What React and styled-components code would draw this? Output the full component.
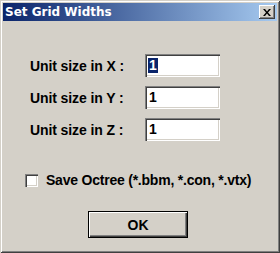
import React, { useState } from "react";
import styled, { createGlobalStyle } from "styled-components";

const Global = createGlobalStyle`
  html, body {
    margin: 0;
    padding: 0;
    background: #d4d0c8;
  }
`;

const Window = styled.div`
  box-sizing: border-box;
  width: 280px;
  height: 253px;
  padding: 3px;
  background: #d4d0c8;
  box-shadow: inset 1px 1px #d4d0c8, inset -1px -1px #404040,
    inset 2px 2px #ffffff, inset -2px -2px #808080;
  display: flex;
  flex-direction: column;
  font-family: "Liberation Sans", Arial, sans-serif;
`;

const TitleBar = styled.div`
  height: 18px;
  display: flex;
  align-items: center;
  justify-content: space-between;
  padding: 0 2px 0 2px;
  background: linear-gradient(to right, #0a246a, #a6caf0);
`;

const Title = styled.span`
  color: #ffffff;
  font-family: "DejaVu Sans", Tahoma, sans-serif;
  font-weight: bold;
  font-size: 12px;
`;

const CloseButton = styled.button`
  box-sizing: border-box;
  width: 16px;
  height: 14px;
  padding: 0;
  border: none;
  background: #d4d0c8;
  box-shadow: inset -1px -1px #404040, inset 1px 1px #ffffff,
    inset -2px -2px #808080;
  display: flex;
  align-items: center;
  justify-content: center;
`;

const Body = styled.div`
  flex: 1;
  display: flex;
  flex-direction: column;
  padding: 33px 0 0 0;
`;

const Fields = styled.div`
  display: grid;
  grid-template-columns: 115px 75px;
  row-gap: 9px;
  padding-left: 27px;
  align-items: center;
`;

const Label = styled.label`
  font-size: 14px;
  font-weight: bold;
  letter-spacing: -0.1px;
  color: #000;
  white-space: nowrap;
`;

const Field = styled.div`
  box-sizing: border-box;
  height: 23px;
  background: #ffffff;
  box-shadow: inset 1px 1px #808080, inset 2px 2px #404040,
    inset -1px -1px #ffffff, inset -2px -2px #d4d0c8;
  display: flex;
  align-items: center;
  padding-left: 3px;
  font-size: 14px;
  font-weight: bold;
`;

const Value = styled.span`
  line-height: 15px;
  padding: 0 1px;
  color: ${(p) => (p.selected ? "#ffffff" : "#000000")};
  background: ${(p) => (p.selected ? "#0a246a" : "transparent")};
`;

const CheckRow = styled.label`
  display: flex;
  align-items: center;
  gap: 8px;
  margin-top: 31px;
  padding-left: 22px;
  font-size: 14px;
  font-weight: bold;
  letter-spacing: -0.22px;
`;

const Box = styled.span`
  box-sizing: border-box;
  width: 13px;
  height: 13px;
  background: #ffffff;
  box-shadow: inset 1px 1px #808080, inset 2px 2px #404040,
    inset -1px -1px #ffffff, inset -2px -2px #d4d0c8;
`;

const Footer = styled.div`
  display: flex;
  justify-content: center;
  margin-top: 23px;
  padding-right: 4px;
`;

const OkButton = styled.button`
  box-sizing: border-box;
  width: 100px;
  height: 27px;
  border: 1px solid #000;
  background: #d4d0c8;
  box-shadow: inset 1px 1px #ffffff, inset -1px -1px #404040,
    inset -2px -2px #808080;
  font-family: "Liberation Sans", Arial, sans-serif;
  font-size: 14px;
  font-weight: bold;
  color: #000;
`;

const rows = [
  { axis: "X", selected: true },
  { axis: "Y" },
  { axis: "Z" },
];

export default function App() {
  const [octree, setOctree] = useState(false);
  return (
    <>
      <Global />
      <Window>
        <TitleBar>
          <Title>Set Grid Widths</Title>
          <CloseButton aria-label="Close">
            <svg width="8" height="7" viewBox="0 0 8 7">
              <path d="M0 0h2l2 2.5L6 0h2L5 3.5 8 7H6L4 4.5 2 7H0l3-3.5z" fill="#000" />
            </svg>
          </CloseButton>
        </TitleBar>
        <Body>
          <Fields>
            {rows.map((r) => (
              <React.Fragment key={r.axis}>
                <Label>Unit size in {r.axis} :</Label>
                <Field>
                  <Value selected={r.selected}>1</Value>
                </Field>
              </React.Fragment>
            ))}
          </Fields>
          <CheckRow onClick={() => setOctree(!octree)}>
            <Box />
            Save Octree (*.bbm, *.con, *.vtx)
          </CheckRow>
          <Footer>
            <OkButton>OK</OkButton>
          </Footer>
        </Body>
      </Window>
    </>
  );
}
